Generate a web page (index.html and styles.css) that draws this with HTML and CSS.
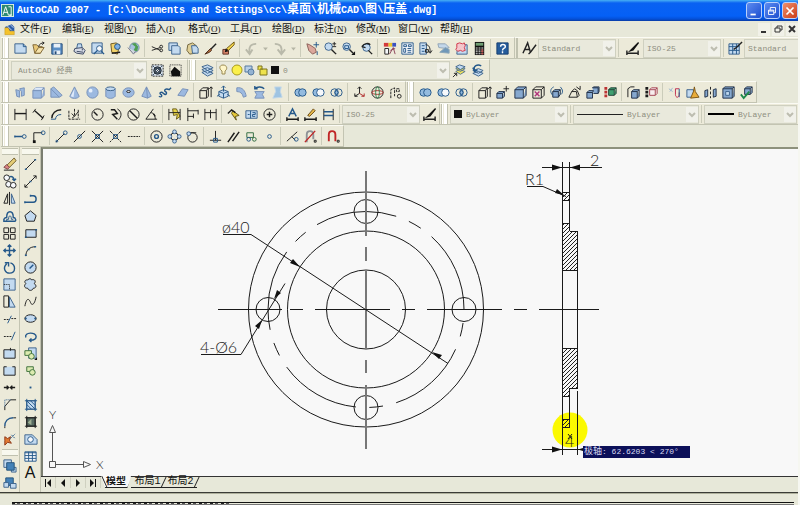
FILE: index.html
```
<!DOCTYPE html>
<html lang="zh-CN">
<head>
  <meta charset="UTF-8">
  <meta name="viewport" content="width=device-width, initial-scale=1.0">
  <title>AutoCAD 2007</title>
  <link rel="stylesheet" href="styles.css">
</head>
<body>

  <!-- Title bar -->
  <header class="titlebar">
    <svg class="app-icon" viewBox="0 0 14 14"><path d="M0 0h14v14H0z" fill="#dff0e6"/><path d="M1 1h12v12H1z" fill="#2d8a72"/><path d="M2 12L5 3l3 9M3 9h4M8 3h3v9H9M8 12h4" fill="none" stroke="#fff"/></svg>
    <h1>AutoCAD 2007 - [C:\Documents and Settings\cc\<span class="cjk">桌面</span>\<span class="cjk">机械</span>CAD\<span class="cjk">图</span>\<span class="cjk">压盖</span>.dwg]</h1>
    <div class="window-buttons">
      <button aria-label="最小化"><svg viewBox="0 0 16 16"><path d="M4 12h6" stroke-width="2"/></svg></button>
      <button aria-label="还原"><svg viewBox="0 0 16 16"><path d="M6 7V4h6v6H10M4 7h6v5H4zM4 8h6"/></svg></button>
      <button class="close" aria-label="关闭"><svg viewBox="0 0 16 16"><path d="M4 4l8 8M12 4l-8 8" stroke-width="2"/></svg></button>
    </div>
  </header>

  <!-- Menu -->
  <nav class="menubar">
    <svg class="doc-icon" viewBox="0 0 14 14"><path d="M1 4l8-3 3 3v5H3z" fill="#2b5ca8"/><path d="M1 5h4l2 4h5v4H1z" fill="#f4c22c" stroke="#b98a14" stroke-width=".5"/><path d="M4 3l5 5M8 2l3 3" stroke="#dfeaf8"/></svg>
    <button>文件<i>(<u>F</u>)</i></button>
    <button>编辑<i>(<u>E</u>)</i></button>
    <button>视图<i>(<u>V</u>)</i></button>
    <button>插入<i>(<u>I</u>)</i></button>
    <button>格式<i>(<u>O</u>)</i></button>
    <button>工具<i>(<u>T</u>)</i></button>
    <button>绘图<i>(<u>D</u>)</i></button>
    <button>标注<i>(<u>N</u>)</i></button>
    <button>修改<i>(<u>M</u>)</i></button>
    <button>窗口<i>(<u>W</u>)</i></button>
    <button>帮助<i>(<u>H</u>)</i></button>
    <div class="mdi-buttons">
      <button aria-label="最小化窗口"><svg viewBox="0 0 12 12"><path d="M3 9h5" stroke-width="2"/></svg></button>
      <button aria-label="还原窗口"><svg viewBox="0 0 12 12"><path d="M5 5V3h5v4H8M3 5h5v4H3z"/></svg></button>
      <button aria-label="关闭窗口"><svg viewBox="0 0 12 12"><path d="M3 3l6 6M9 3l-6 6" stroke-width="2"/></svg></button>
    </div>
  </nav>

  <!-- Standard and styles -->
  <div class="dock-row">
    <div class="toolbar">
      <button title="新建"><svg viewBox="0 0 16 16"><path class="f" d="M2 3h9l3 3v7H2z"/><path class="n" d="M11 3v3h3"/></svg></button>
      <button title="打开"><svg viewBox="0 0 16 16"><path d="M2 4h4l2 2h4l-2 7H4z" fill="#e9c878" stroke="#7d6434"/><path d="M8 6c1-3 3-4 6-4l-2-1m2 1l-2 2"/><path d="M4 13l4-6h6l-4 6z" fill="#f6e3ac" stroke="#7d6434"/></svg></button>
      <button title="保存"><svg viewBox="0 0 16 16"><path d="M3 3h11v11H3z" fill="#5b8fc6" stroke="#234b78"/><path d="M5 3h7v4H5zM5 10h7v4H5z" fill="#e8f0f8" stroke="none"/><path d="M6 11h2v3H6z" fill="#234b78" stroke="none"/></svg></button>
      <span class="sep"></span>
      <button title="打印"><svg viewBox="0 0 16 16"><path class="f" d="M5 8l1-5h4l1 5"/><path d="M3 8l8-1 3 3-2 4-7-1-3-2z" fill="#d6dbe6" stroke="#3a4560"/><path d="M5 11l7 1M11 8v2" stroke="#3a4560"/></svg></button>
      <button title="打印预览"><svg viewBox="0 0 16 16"><path class="f" d="M2 2h11v11H2z"/><circle class="w n" cx="10" cy="8" r="3"/><path class="n t" d="M12 11l3 3M8 10l-4 4"/></svg></button>
      <button title="发布"><svg viewBox="0 0 16 16"><path d="M3 3l6-1 3 4-2 8-6-2z" fill="#f0d16a" stroke="#6c5620"/><circle cx="10" cy="6" r="3" fill="#7db0e6" stroke="#24527a"/><path class="t" d="M4 13l9-1"/></svg></button>
      <button title="三维 DWF"><svg viewBox="0 0 16 16"><circle cx="9" cy="7" r="5" fill="#a9c2de" stroke="#6f8aa8"/><path d="M6 3l4 3-2 4 4 1 1-5-3-4z" fill="#4f9e52" stroke="none"/><path d="M2 7l6 7 2-3" fill="#cfd8e0" stroke="#778"/></svg></button>
      <span class="sep"></span>
      <button title="剪切"><svg viewBox="0 0 16 16"><path d="M3 6l9 4M3 10l9-3"/><circle cx="13" cy="6" r="1.5"/><circle cx="13" cy="10" r="1.5"/></svg></button>
      <button title="复制"><svg viewBox="0 0 16 16"><path class="f" d="M2 2h9v8H2z"/><path class="f" d="M5 5h7l2 2v7H5z"/></svg></button>
      <button title="粘贴"><svg viewBox="0 0 16 16"><path d="M3 4l5-2 4 3-1 8-6 1-3-4z" fill="#e0cf96" stroke="#70643c"/><path class="f" d="M7 5h5l2 3v5H8z"/></svg></button>
      <button title="特性匹配"><svg viewBox="0 0 16 16"><path class="t" d="M14 3L8 9"/><path d="M8 8l-6 6 5-2 2-2z" fill="#b06a3c" stroke="#4a2a18"/></svg></button>
      <button title="块编辑器"><svg viewBox="0 0 16 16"><path d="M2 9h6v5H2z" fill="#d9846a" stroke="#5c2f22"/><path d="M14 1l-8 7 2 2 6-6z" fill="#f3d44c" stroke="#6a5410"/><path class="s" d="M5 8l3 3-4 1z"/></svg></button>
      <span class="sep"></span>
      <button title="放弃" disabled><svg viewBox="0 0 16 16"><path class="g" d="M13 3C7 3 5 6 6 13M2 9l4 5 3-5"/></svg></button>
      <button class="drop" title="放弃列表" disabled><svg viewBox="0 0 8 16"><path d="M2 7h5L4.5 10z" fill="#b5b5a5" stroke="none"/></svg></button>
      <button title="重做" disabled><svg viewBox="0 0 16 16"><path class="g" d="M3 3c6 0 8 3 7 10M6 9l4 5 4-5"/></svg></button>
      <button class="drop" title="重做列表" disabled><svg viewBox="0 0 8 16"><path d="M2 7h5L4.5 10z" fill="#b5b5a5" stroke="none"/></svg></button>
      <span class="sep"></span>
      <button title="实时平移"><svg viewBox="0 0 16 16"><path d="M2 3l3 1 6 4 1 4-4 2-4-4z" fill="#dba79c" stroke="#8b5f58"/><path class="n" d="M12 1v6M9 4h6M13 11v4"/></svg></button>
      <button title="实时缩放"><svg viewBox="0 0 16 16"><circle class="f" cx="6" cy="6" r="4"/><path class="t" d="M9 9l5 5"/><path d="M12 1v4M10 3h4M10 6h4"/></svg></button>
      <button title="窗口缩放"><svg viewBox="0 0 16 16"><circle class="f" cx="6" cy="6" r="4"/><path class="n" d="M4 5h4v3H4z"/><path class="t" d="M9 9l4 4"/><path class="s" d="M15 11v4h-4z"/></svg></button>
      <button title="缩放上一个"><svg viewBox="0 0 16 16"><circle class="f" cx="8" cy="7" r="4"/><path class="t" d="M10 10l4 4M3 6c3-4 7-4 9-2M3 6l4 1"/></svg></button>
      <span class="sep"></span>
      <button title="特性"><svg viewBox="0 0 16 16"><path d="M2 2h5v4H2z" fill="#d33a3a" stroke="none"/><path d="M7 2h4v4H7z" fill="#e8c52d" stroke="none"/><path d="M11 2h4v4h-4z" fill="#3b52c0" stroke="none"/><path class="w" d="M3 8h4v6H3z"/><path d="M8 14l4-7 2 7M9 10l5-2" stroke="#8c4057"/></svg></button>
      <button title="设计中心"><svg viewBox="0 0 16 16"><path class="w n" d="M2 2h12v12H2z"/><path class="n" d="M4 4h3v2H4zM9 4h3v2H9zM4 8h2v4H4zM8 8h4M8 10h4M8 12h4"/></svg></button>
      <button title="工具选项板"><svg viewBox="0 0 16 16"><path class="f" d="M2 2h7v12H2z"/><path class="n" d="M4 5h3M4 8h3M4 11h3"/><path d="M8 4c4 0 5 3 5 8M11 10l2 3 2-3M8 9h3v3H8z"/></svg></button>
      <button title="图纸集管理器"><svg viewBox="0 0 16 16"><path d="M2 3h8l4 4-3 1-8-1z" fill="#c3d7ea" stroke="#91a4b5"/><path d="M4 12l6-5 4 2v4z" fill="#6f97b8" stroke="#8ba5b8"/></svg></button>
      <button title="标记集管理器"><svg viewBox="0 0 16 16"><path class="f" d="M4 4h10v10H3z"/><path d="M3 3l3-1 3 1 2-1 1 3-1 2 1 3-3 1-2-1-3 1-2-2 1-2z" fill="#f4c6cb" stroke="#cf3246"/></svg></button>
      <button title="计算器"><svg viewBox="0 0 16 16"><path class="s" d="M3 1h10v14H3z"/><path d="M4 2h8v3H4z" fill="#6e9c72" stroke="none"/><path d="M5 7v7M8 7v7M11 7v7" stroke="#ddd" stroke-width="2" stroke-dasharray="1 1"/><path d="M11 9v5" stroke="#c33" stroke-width="2" stroke-dasharray="1 1"/></svg></button>
      <span class="sep"></span>
      <button title="帮助"><svg viewBox="0 0 16 16"><path d="M2 2h12v12H2z" fill="#255c9c" stroke="#153c6d"/><path d="M6 6c0-3 5-3 5 0 0 2-3 1-3 4M8 11v2" stroke="#fff" stroke-width="1.5"/></svg></button>
      <span class="pad"></span>
    </div>
    <div class="toolbar fill">
      <button title="文字样式"><svg viewBox="0 0 16 16"><path class="t" d="M1 13L6 2l3 10M3 9h5"/><path class="t" d="M15 4l-6 8-2 2"/></svg></button>
      <label class="combo w78"><select aria-label="文字样式"><option>Standard</option></select></label>
      <span class="sep"></span>
      <button class="wide" title="标注样式"><svg viewBox="0 0 16 16"><path class="t" d="M2 13h12M2 10v5M14 10v5"/><path class="s" d="M14 1l1 1-6 8-6 2 3-3z"/></svg></button>
      <label class="combo w78"><select aria-label="标注样式"><option>ISO-25</option></select></label>
      <span class="sep"></span>
      <button title="表格样式"><svg viewBox="0 0 16 16"><path class="f" d="M1 3h11v11H1z"/><path class="n" d="M1 6h11M1 10h11M5 3v11M9 3v11"/><path class="t" d="M15 1l-6 6-3 2"/></svg></button>
      <label class="combo cut"><select aria-label="表格样式"><option>Standard</option></select></label>
    </div>
  </div>

  <!-- Workspaces and layers -->
  <div class="dock-row">
    <div class="toolbar">
      <label class="combo w136"><select class="indent" aria-label="工作空间"><option>AutoCAD 经典</option></select></label>
      <button title="工作空间设置"><svg viewBox="0 0 16 16"><path d="M2 2h12v12H2z" fill="#dce7f2" stroke-dasharray="2 1"/><circle cx="8" cy="8" r="4" fill="#526b86"/><circle class="w" cx="8" cy="8" r="2"/><path d="M3 3l10 10M13 3L3 13" stroke="#3c4d60"/></svg></button>
      <button title="我的工作空间"><svg viewBox="0 0 16 16"><path d="M2 2h12v12H2z" stroke-dasharray="1 1"/><path class="s" d="M3 9l4-5 6 5v5H4z"/></svg></button>
      <span class="pad"></span>
    </div>
    <div class="toolbar">
      <button title="图层特性管理器"><svg viewBox="0 0 16 16"><path class="f" d="M2 10l6-2 6 3-6 3zM2 7l6-2 6 3-6 3zM2 4l6-2 6 3-6 3z"/></svg></button>
      <div class="combo layer">
        <svg viewBox="0 0 66 16"><path d="M6 3c4 0 5 4 2 6v3H5V9C2 7 2 3 6 3z" fill="#fff6c8" stroke="#9a8a52"/><circle cx="20" cy="8" r="5" fill="#fbf04a" stroke="#a89a1c"/><path d="M28 4h7v6h-7z" fill="#b8cfe6" stroke="#567aa0"/><circle cx="34" cy="10" r="3" fill="#93b2d2" stroke="#567aa0"/><path d="M41 8V4h4v4M43 7h7v6h-7z" fill="#eee24c" stroke="#7d741c"/><path class="s" d="M54 4h8v8h-8z"/></svg>
        <select aria-label="图层"><option>0</option></select>
      </div>
      <button title="将对象的图层置为当前"><svg viewBox="0 0 16 16"><path d="M4 9l4-2 6 2-5 3zM4 6l4-2 6 2-5 3z" fill="#f3e45a" stroke="#56758c"/><path class="f" d="M4 4l4-2 6 2-5 3z"/><path d="M1 15l4-4M2 11h3v3"/></svg></button>
      <button title="上一个图层"><svg viewBox="0 0 16 16"><path class="f" d="M3 11l6-2 5 2-5 3zM3 8l6-2 5 2-5 3z"/><path class="n t" d="M5 8c-2-5 3-7 7-5M3 5l2 4 3-2"/></svg></button>
      <span class="pad"></span>
    </div>
  </div>

  <!-- Modeling and solid editing -->
  <div class="dock-row">
    <div class="toolbar">
      <button title="多段体"><svg viewBox="0 0 16 16"><path class="v" d="M3 5l4 1v7l-3-1zM7 4l5-1v8l-3 1V7z"/></svg></button>
      <button title="长方体"><svg viewBox="0 0 16 16"><path class="v" d="M2 6h9v8H2zM2 6l3-3h9l-3 3M14 3v8l-3 3"/><path d="M3 5l2-2h8l-2 2z" fill="#dfeafa" stroke="none"/></svg></button>
      <button title="楔体"><svg viewBox="0 0 16 16"><path class="v" d="M2 4l9 9H2zM2 4l3-2 9 9-3 2"/></svg></button>
      <button title="圆锥体"><svg viewBox="0 0 16 16"><path class="v" d="M8 2l5 10c-1 3-9 3-10 0z"/><path d="M8 4l-1 9-3-1z" fill="#dfeafa" stroke="none"/></svg></button>
      <button title="球体"><svg viewBox="0 0 16 16"><circle class="v" cx="8" cy="8" r="6"/><circle cx="6" cy="6" r="2" fill="#e6effc" stroke="none"/></svg></button>
      <button title="圆柱体"><svg viewBox="0 0 16 16"><path class="v" d="M3 4v8c2 3 8 3 10 0V4"/><ellipse class="f" cx="8" cy="4" rx="5" ry="2"/></svg></button>
      <button title="圆环体"><svg viewBox="0 0 16 16"><ellipse class="v" cx="8" cy="8" rx="6" ry="5"/><ellipse class="w" cx="8" cy="7" rx="2" ry="1"/></svg></button>
      <button title="棱锥面"><svg viewBox="0 0 16 16"><path class="v" d="M8 2l5 10-4 2-6-2zM8 2l1 12"/></svg></button>
      <button title="螺旋"><svg viewBox="0 0 16 16"><path class="n t" d="M2 12c3 2 4-1 2-2s0-4 3-1 4-1 2-2 0-4 4-2l2-2"/></svg></button>
      <button title="平面曲面"><svg viewBox="0 0 16 16"><path class="v" d="M3 11l5-7 6 1-4 7z"/></svg></button>
      <span class="sep"></span>
      <button title="拉伸"><svg viewBox="0 0 16 16"><path class="k" d="M2 6h7v8H2zM2 6l3-3h6L9 6M11 3v9l-2 2M14 13V2M12 4l2-2 2 2"/></svg></button>
      <button title="按住并拖动"><svg viewBox="0 0 16 16"><path class="f" d="M3 7l5-2 5 2v5l-5 2-5-2z"/><path class="n" d="M3 7l5 2 5-2M8 9v5M8 1v6M6 3l2-2 2 2M1 12l3-2M15 12l-3-2"/></svg></button>
      <button title="扫掠"><svg viewBox="0 0 16 16"><path class="v" d="M3 3c6-1 9 3 10 9l-3 1C9 9 7 7 3 7z"/></svg></button>
      <button title="旋转"><svg viewBox="0 0 16 16"><path class="v" d="M3 7h10l-2 3 2 4H3l2-4z"/><path class="n t" d="M3 4c3-3 8-2 10 0M3 1v3h3"/></svg></button>
      <button title="放样"><svg viewBox="0 0 16 16"><path d="M5 2h7l-1 5 2 6-10 1 3-7z" fill="#9fc4e2" stroke="#c4d9e8"/></svg></button>
      <span class="sep"></span>
      <button title="并集"><svg viewBox="0 0 16 16"><circle class="u" cx="6" cy="8" r="4"/><circle class="u" cx="10" cy="8" r="4"/></svg></button>
      <button title="差集"><svg viewBox="0 0 16 16"><circle class="u" cx="6" cy="8" r="4"/><circle class="w n" cx="10" cy="8" r="4"/></svg></button>
      <button title="交集"><svg viewBox="0 0 16 16"><circle class="n" cx="6" cy="8" r="4"/><circle class="n" cx="10" cy="8" r="4"/><path class="u" d="M8 5q3 3 0 6-3-3 0-6z"/></svg></button>
      <span class="sep"></span>
      <button title="三维移动"><svg viewBox="0 0 16 16"><path class="k" d="M8 9V2l-2 2m2-2l2 2M8 9l-5 3V9m0 3h3"/><path d="M8 9l5 3V9m0 3h-3" stroke="#b02a2a"/></svg></button>
      <button title="三维旋转"><svg viewBox="0 0 16 16"><circle class="k" cx="8" cy="8" r="6"/><ellipse cx="8" cy="8" rx="6" ry="2" stroke="#b02a2a"/><ellipse cx="8" cy="8" rx="2" ry="6" stroke="#26804a"/></svg></button>
      <button title="三维对齐"><svg viewBox="0 0 16 16"><path class="k" d="M3 14V5l4-2v9M9 4h3v3H9z" stroke-dasharray="3 1"/><circle cx="12" cy="12" r="2"/></svg></button>
    </div>
    <div class="toolbar">
      <button title="并集"><svg viewBox="0 0 16 16"><circle class="u" cx="6" cy="8" r="4"/><circle class="u" cx="10" cy="8" r="4"/></svg></button>
      <button title="差集"><svg viewBox="0 0 16 16"><circle class="u" cx="6" cy="8" r="4"/><circle class="w n" cx="10" cy="8" r="4"/></svg></button>
      <button title="交集"><svg viewBox="0 0 16 16"><circle class="n" cx="6" cy="8" r="4"/><circle class="n" cx="10" cy="8" r="4"/><path class="u" d="M8 5q3 3 0 6-3-3 0-6z"/></svg></button>
      <span class="sep"></span>
      <button title="拉伸面"><svg viewBox="0 0 16 16"><path class="k" d="M2 6h7v8H2zM2 6l3-3h6L9 6M11 3v9l-2 2M14 13V2M12 4l2-2 2 2"/></svg></button>
      <button title="移动面"><svg viewBox="0 0 16 16"><path class="e" d="M2 9h6v5H2zM2 9l2-2h6L8 9M10 7v5l-2 2"/><path d="M9 4h6M12 1v6"/></svg></button>
      <button title="偏移面"><svg viewBox="0 0 16 16"><path class="e" d="M2 5h9v9H2zM2 5l3-3h9l-3 3M14 2v9l-3 3"/></svg></button>
      <button title="删除面"><svg viewBox="0 0 16 16"><path class="k" d="M2 5h9v9H2zM2 5l3-3h9l-3 3M14 2v9l-3 3"/><path d="M4 7l5 5M9 7l-5 5" stroke="#b0347a" stroke-width="1.5"/></svg></button>
      <button title="旋转面"><svg viewBox="0 0 16 16"><path class="e" d="M4 7h6v6H4zM4 7l2-2h6l-2 2M12 5v5l-2 3"/><path class="n" d="M5 2C1 4 1 8 4 11M12 2c3 3 3 6 1 8"/></svg></button>
      <button title="倾斜面"><svg viewBox="0 0 16 16"><path class="k" d="M2 13l3-6h5l1 6zM5 7l3-3 3 2M11 6l2 5-2 2M10 2l4 3v-4"/></svg></button>
      <button title="复制面"><svg viewBox="0 0 16 16"><path class="e" d="M2 8h6v6H2zM2 8l2-2h5L8 8M8 3h6v6H9M8 3l1-1h6v5l-1 2"/></svg></button>
      <button title="着色面"><svg viewBox="0 0 16 16"><path d="M3 2v12" stroke="#b33" stroke-width="3" stroke-dasharray="3 1"/><path d="M6 5h6v6H6zM6 5l2-2h6l-2 2M14 3v6l-2 2" fill="#3fa070" stroke="#1f3f35"/></svg></button>
      <span class="sep"></span>
      <button title="复制边"><svg viewBox="0 0 16 16"><path class="e" d="M6 7h6v7H6zM6 7l2-2h6l-2 2M14 5v7l-2 2"/><path class="k" d="M2 13V4l3-2h4"/></svg></button>
      <button title="着色边"><svg viewBox="0 0 16 16"><path class="k" d="M3 2v12" stroke-width="3" stroke-dasharray="3 1"/><path d="M6 5h6v6H6zM6 5l2-2h6l-2 2M14 3v6l-2 2" fill="#f7eded" stroke="#a34050"/></svg></button>
      <span class="sep"></span>
      <button title="压印"><svg viewBox="0 0 16 16"><path d="M2 4l4 3M3 7l3-4" stroke="#9ab6d0"/><path d="M13 4H9v6c0 4 4 4 4 0V8" stroke="#c0284a"/><path class="n" d="M13 4v9"/></svg></button>
      <button title="清除"><svg viewBox="0 0 16 16"><path class="f" d="M2 5h7v8H2z"/><path d="M10 2l1 5 4 6-9 1 3-7z" fill="#e8ac3a" stroke="#7a5415"/></svg></button>
      <button title="分割"><svg viewBox="0 0 16 16"><path class="e" d="M2 6l3-1v7l-3 1zM11 5l3-1v8l-3 1z"/><path class="k" d="M8 2v12" stroke-dasharray="3 2"/></svg></button>
      <button title="抽壳"><svg viewBox="0 0 16 16"><path class="e" d="M2 4h10v10H2zM2 4l2-2h10l-2 2M14 2v10l-2 2"/><path class="f" d="M5 7h4v4H5z"/></svg></button>
      <button title="检查"><svg viewBox="0 0 16 16"><path class="e" d="M6 4h6v6H6zM6 4l2-2h6l-2 2M14 2v6l-2 2"/><path d="M2 10l3 4 6-7" stroke="#1f8a4a" stroke-width="2"/></svg></button>
    </div>
  </div>

  <!-- Dimension and properties -->
  <div class="dock-row">
    <div class="toolbar">
      <button title="线性"><svg viewBox="0 0 16 16"><path class="k" d="M2 2v12M14 2v12"/><path class="k t" d="M2 7h12"/></svg></button>
      <button title="对齐"><svg viewBox="0 0 16 16"><path class="k" d="M5 2L2 6M14 9l-3 5"/><path class="k t" d="M4 4l9 8"/></svg></button>
      <button title="弧长"><svg viewBox="0 0 16 16"><path class="k t" d="M3 12C3 7 7 3 13 3"/><path class="n" d="M7 13c0-3 2-5 6-5M2 13h5"/></svg></button>
      <button title="坐标"><svg viewBox="0 0 16 16"><path class="k" d="M2 4v9h12M8 2v8l-3 2M12 3v9" stroke-dasharray="3 1"/><path class="k" d="M5 7l3 3 4-5"/></svg></button>
      <span class="sep"></span>
      <button title="半径"><svg viewBox="0 0 16 16"><circle class="k" cx="8" cy="8" r="6"/><path class="k t" d="M4 5l4 4"/></svg></button>
      <button title="折弯"><svg viewBox="0 0 16 16"><path class="k t" d="M3 3h4l3 4-5 1 5 5"/><path class="k" d="M10 2c5 3 5 8 1 12"/></svg></button>
      <button title="直径"><svg viewBox="0 0 16 16"><circle class="k" cx="8" cy="8" r="6"/><path class="k t" d="M4 4l8 8"/></svg></button>
      <button title="角度"><svg viewBox="0 0 16 16"><path class="k" d="M10 2L2 13h12M7 6c3 0 5 3 5 7"/><path class="k t" d="M10 7l2 3"/></svg></button>
      <span class="sep"></span>
      <button title="快速标注"><svg viewBox="0 0 16 16"><path d="M6 2h4l4 8-4 3 1-5-4 1z" fill="#e6d24a" stroke="#6b5d16"/><path class="k" d="M2 2v12M14 2v12M2 6h12"/></svg></button>
      <button title="基线"><svg viewBox="0 0 16 16"><path class="k" d="M3 1v14M9 7v5M14 3v5M3 4h11M3 10h6"/></svg></button>
      <button title="连续"><svg viewBox="0 0 16 16"><path class="k" d="M2 2v12M8 3v9M14 2v12M2 6h12"/></svg></button>
      <span class="sep"></span>
      <button title="快速引线"><svg viewBox="0 0 16 16"><path d="M7 4l7 5-4 1 1 4-5-7z" fill="#e6c93a" stroke="#5d5013"/><path class="k t" d="M2 7l4-4 4 3"/></svg></button>
      <button title="公差"><svg viewBox="0 0 16 16"><path class="f" d="M2 4h12v8H2z"/><path class="n" d="M7 4v8M4 8h2M9 6h3v2H9v2h3"/></svg></button>
      <button title="圆心标记"><svg viewBox="0 0 16 16"><circle class="k" cx="8" cy="8" r="6"/><path class="k t" d="M8 5v6M5 8h6"/></svg></button>
      <span class="sep"></span>
      <button title="编辑标注"><svg viewBox="0 0 16 16"><path class="k t" d="M2 13h12M2 11v4M14 11v4"/><path class="n t" d="M4 10l4-8 4 8M6 7h4"/></svg></button>
      <button title="编辑标注文字"><svg viewBox="0 0 16 16"><path class="k t" d="M2 13h12M2 11v4M14 11v4"/><path d="M5 9l6-7 2 2-6 6z" fill="#e7b94a" stroke="#6a4b16"/></svg></button>
      <button title="标注更新"><svg viewBox="0 0 16 16"><path class="k" d="M3 2v12M13 2v12"/><path class="n t" d="M3 5h10M3 9h10"/></svg></button>
      <span class="sep"></span>
      <label class="combo w78"><select aria-label="标注样式控制"><option>ISO-25</option></select></label>
      <button title="标注样式"><svg viewBox="0 0 16 16"><path class="t" d="M2 13h12M2 10v5M14 10v5"/><path class="s" d="M14 1l1 1-6 8-6 2 3-3z"/></svg></button>
    </div>
    <div class="toolbar fill">
      <div class="combo w118"><svg viewBox="0 0 12 12" class="swatch"><path class="s" d="M3 2h8v8H3z"/></svg><select aria-label="颜色"><option>ByLayer</option></select></div>
      <span class="sep"></span>
      <div class="combo w126"><svg class="line-sample" viewBox="0 0 50 12"><path d="M3 6.5h46" stroke="#222"/></svg><select aria-label="线型"><option>ByLayer</option></select></div>
      <span class="sep"></span>
      <div class="combo grow"><svg class="weight-sample" viewBox="0 0 30 12"><path d="M3 6h26" stroke="#000" stroke-width="2"/></svg><select aria-label="线宽"><option>ByLayer</option></select></div>
    </div>
  </div>

  <!-- Object snap -->
  <div class="dock-row">
    <div class="toolbar">
      <button title="临时追踪点"><svg viewBox="0 0 16 16"><path class="n t" d="M2 8h8M2 7v2"/><circle class="n" cx="12" cy="8" r="2"/></svg></button>
      <button title="捕捉自"><svg viewBox="0 0 16 16"><path class="k" d="M3 14V4h9"/><path class="s" d="M2 12h3v3H2z"/><circle class="n" cx="13" cy="4" r="2"/></svg></button>
      <span class="sep"></span>
      <button title="端点"><svg viewBox="0 0 16 16"><path class="k" d="M2 14l9-9"/><circle class="n" cx="12" cy="4" r="2"/><circle class="n" cx="3" cy="13" r="1"/></svg></button>
      <button title="中点"><svg viewBox="0 0 16 16"><path class="k" d="M2 14L14 2"/><circle class="n" cx="8" cy="8" r="2"/></svg></button>
      <button title="交点"><svg viewBox="0 0 16 16"><path class="k" d="M2 2l12 12M14 2L2 14"/><path class="n" d="M6 6h4v4H6z"/></svg></button>
      <button title="外观交点"><svg viewBox="0 0 16 16"><path class="k" d="M2 2l12 12M14 2L2 14" stroke-dasharray="4 1"/><path class="n" d="M6 6h4v4H6z"/></svg></button>
      <button title="延长线"><svg viewBox="0 0 16 16"><path class="k" d="M2 8h5M8 8h7" stroke-dasharray="2 1"/></svg></button>
      <span class="sep"></span>
      <button title="圆心"><svg viewBox="0 0 16 16"><circle class="k" cx="8" cy="8" r="6"/><circle class="n t" cx="8" cy="8" r="2"/></svg></button>
      <button title="象限点"><svg viewBox="0 0 16 16"><circle class="k" cx="8" cy="8" r="4"/><g class="f"><circle cx="8" cy="3" r="2"/><circle cx="8" cy="13" r="2"/><circle cx="3" cy="8" r="2"/><circle cx="13" cy="8" r="2"/></g></svg></button>
      <button title="切点"><svg viewBox="0 0 16 16"><circle class="k" cx="8" cy="9" r="5"/><path class="k" d="M2 4h10"/><circle class="f" cx="4" cy="5" r="2"/></svg></button>
      <span class="sep"></span>
      <button title="垂足"><svg viewBox="0 0 16 16"><path class="k" d="M8 2v10M2 12h12"/><path class="n" d="M6 10h4v4H6z"/></svg></button>
      <button title="平行"><svg viewBox="0 0 16 16"><path class="k t" d="M2 14l7-10M7 13l7-10"/></svg></button>
      <button title="插入点"><svg viewBox="0 0 16 16"><path d="M3 4h7v5H3z" stroke="#2f6b3f"/><circle cx="11" cy="11" r="2" stroke="#2f6b3f"/><circle class="n" cx="5" cy="11" r="2"/></svg></button>
      <button title="节点"><svg viewBox="0 0 16 16"><circle class="n" cx="8" cy="8" r="2"/></svg></button>
      <span class="sep"></span>
      <button title="最近点"><svg viewBox="0 0 16 16"><path class="k" d="M2 13L13 3M7 8l4 4"/><circle class="n" cx="12" cy="11" r="2"/></svg></button>
      <button title="无捕捉"><svg viewBox="0 0 16 16"><path d="M4 14V6c0-5 7-5 7 0v5" stroke="#8e9296" stroke-width="2"/><path d="M2 14L13 2" stroke="#c02626" stroke-width="1.5"/><path class="k" d="M12 12h2v2h-2z"/></svg></button>
      <span class="sep"></span>
      <button title="对象捕捉设置"><svg viewBox="0 0 16 16"><path d="M3 13V6c0-5 7-5 7 0v7" stroke="#c02626" stroke-width="2"/><path class="k" d="M12 12h2v2h-2z"/></svg></button>
    </div>
  </div>

  <main class="workspace">
    <!-- Modify -->
    <div class="side-column">
      <div class="side-toolbar long">
        <button title="删除"><svg viewBox="0 0 16 16"><path d="M13 1l2 3-7 7-3-2z" fill="#e5cd76" stroke="#6f5c2b"/><path d="M5 8l3 3-2 2-4-2z" fill="#d98383" stroke="#7b4545"/><path class="k" d="M2 14h11"/></svg></button>
        <button title="复制"><svg viewBox="0 0 16 16"><circle class="w" cx="5" cy="4" r="3"/><circle class="w" cx="7" cy="11" r="3"/><circle class="w" cx="12" cy="12" r="3"/><path class="n t" d="M8 3c3-1 5 1 5 4m-2-2l2 2 2-2"/></svg></button>
        <button title="镜像"><svg viewBox="0 0 16 16"><path class="k" d="M6 3v10H2zM8 1v14"/><path class="f" d="M10 3v10h4z"/></svg></button>
        <button title="偏移"><svg viewBox="0 0 16 16"><path class="n t" d="M2 13v-2c1-2 3-2 3-2 0-8 7-8 7 0 3 0 3 4 2 4z"/><path class="n" d="M5 13v-2h2c0-5 3-5 3 0h2"/></svg></button>
        <button title="阵列"><svg viewBox="0 0 16 16"><path class="k" d="M2 2h5v5H2zM9 2h5v5H9zM2 9h5v5H2zM9 9h5v5H9z"/></svg></button>
        <button title="移动"><svg viewBox="0 0 16 16"><path class="n t" d="M8 2v12M2 8h12M6 4l2-2 2 2M6 12l2 2 2-2M4 6L2 8l2 2M12 6l2 2-2 2"/></svg></button>
        <button title="旋转"><svg viewBox="0 0 16 16"><path class="n t" d="M5 4C0 9 4 14 8 14c7 0 7-9 1-11M3 3h4v4"/></svg></button>
        <button title="缩放"><svg viewBox="0 0 16 16"><path class="f" d="M2 2h12v12H2z"/><path class="k" d="M2 8h6v6" stroke-dasharray="1 1"/></svg></button>
        <button title="拉伸"><svg viewBox="0 0 16 16"><path class="k" d="M2 2h5v12H2z"/><path class="f" d="M8 3l6 11H8z"/></svg></button>
        <button title="修剪"><svg viewBox="0 0 16 16"><path class="k" d="M2 8h5M10 7h5" stroke-dasharray="2 1"/><path class="n" d="M6 12l4-8"/></svg></button>
        <button title="延伸"><svg viewBox="0 0 16 16"><path class="k" d="M2 8h9" stroke-dasharray="2 1"/><path class="n" d="M10 12l4-9"/></svg></button>
        <button title="打断于点"><svg viewBox="0 0 16 16"><path class="f k" d="M2 4h12v9H2z"/><path class="k" d="M9 2v3"/></svg></button>
        <button title="打断"><svg viewBox="0 0 16 16"><path class="f k" d="M5 4H2v9h12V4h-3"/></svg></button>
        <button title="合并"><svg viewBox="0 0 16 16"><path class="k t" d="M2 8h5M9 8h5M5 6l2 2-2 2M11 6L9 8l2 2"/></svg></button>
        <button title="倒角"><svg viewBox="0 0 16 16"><path class="k" d="M3 14v-4l6-7h6"/><path class="n" d="M3 10V3h6" stroke-dasharray="1 1"/></svg></button>
        <button title="圆角"><svg viewBox="0 0 16 16"><path class="k" d="M3 14v-2M12 3h3"/><path class="n t" d="M3 12c0-5 3-9 9-9"/></svg></button>
        <button title="分解"><svg viewBox="0 0 16 16"><path d="M3 5l3 2 3-2-1 4 2 3-4-1-3 3v-5z" fill="#e27a32" stroke="#8b3414"/><path class="n" d="M9 7l5-5M10 3l4 4" stroke-dasharray="2 1"/></svg></button>
      </div>
      <div class="side-toolbar order">
        <button title="前置"><svg viewBox="0 0 16 16"><path class="f" d="M2 2h8v8H2z"/><path class="f" d="M10 10h5v5h-5z"/><path d="M5 5h8v8H5z" fill="#4381b8" stroke="#24527a"/></svg></button>
        <button title="后置"><svg viewBox="0 0 16 16"><path d="M4 2h8v8H4z" fill="#4381b8" stroke="#24527a"/><path class="f" d="M2 7h5v5H2zM9 8h6v5H9z"/></svg></button>
      </div>
    </div>

    <!-- Draw -->
    <div class="side-column draw">
      <div class="side-toolbar long">
        <button title="直线"><svg viewBox="0 0 16 16"><path class="k" d="M3 13L13 3"/><path class="n t" d="M2 13h2M12 3h2"/></svg></button>
        <button title="构造线"><svg viewBox="0 0 16 16"><path class="k" d="M2 14L14 2"/><path class="k" d="M2 11v3h3M11 2h3v3"/><path class="n t" d="M7 8h2"/></svg></button>
        <button title="多段线"><svg viewBox="0 0 16 16"><path class="n t" d="M2 12h9c4 0 4-7 0-7H8M2 11v2M8 4v2"/></svg></button>
        <button title="正多边形"><svg viewBox="0 0 16 16"><path class="f k" d="M8 2l6 5-2 6H4L2 7z"/></svg></button>
        <button title="矩形"><svg viewBox="0 0 16 16"><path class="f k" d="M3 4h11v8H3z"/><path class="n t" d="M2 12h2M13 4h2"/></svg></button>
        <button title="圆弧"><svg viewBox="0 0 16 16"><path class="k" d="M3 14c0-6 4-10 10-10"/><path class="n t" d="M2 13h2M5 7h2M12 4h2"/></svg></button>
        <button title="圆"><svg viewBox="0 0 16 16"><circle class="f k" cx="8" cy="8" r="6"/><path class="n t" d="M7 9l4-4"/></svg></button>
        <button title="修订云线"><svg viewBox="0 0 16 16"><path class="f k" d="M5 3c2-2 4-1 4 0 4-1 5 2 3 4 3 2 2 5-1 5-1 3-5 3-6 0-4 0-4-3-2-5-2-2-1-4 2-4z"/></svg></button>
        <button title="样条曲线"><svg viewBox="0 0 16 16"><path class="k" d="M2 13C4 2 7 6 8 9s4 4 6-6"/></svg></button>
        <button title="椭圆"><svg viewBox="0 0 16 16"><ellipse class="f k" cx="8" cy="8" rx="6" ry="4"/><path class="n t" d="M2 8h2M12 8h2"/></svg></button>
        <button title="椭圆弧"><svg viewBox="0 0 16 16"><path class="n t" d="M3 9C1 3 14 3 14 8c0 4-5 4-6 4M9 10l-2 2 2 2"/></svg></button>
        <button title="插入块"><svg viewBox="0 0 16 16"><path class="f" d="M6 2h8v11H6z"/><path class="l" d="M2 5h7v5H2z"/><circle class="l" cx="9" cy="11" r="3"/><path class="s" d="M15 12v3h-3z"/></svg></button>
        <button title="创建块"><svg viewBox="0 0 16 16"><path class="l" d="M4 4h7v5H4z"/><circle class="l" cx="10" cy="10" r="3"/></svg></button>
        <button title="点"><svg viewBox="0 0 16 16"><path d="M7 7h2v2H7z" fill="#24588a" stroke="none"/></svg></button>
        <button title="图案填充"><svg viewBox="0 0 16 16"><path class="f" d="M4 4h9v9H4z"/><path class="n" d="M2 4h13M4 2v13M2 13h13M13 2v13M4 8l5 5M4 4l9 9M8 4l5 5"/></svg></button>
        <button title="渐变色"><svg viewBox="0 0 16 16"><path d="M4 4h9v9H4z" fill="#586b62"/><path class="k" d="M2 4h13M4 2v13M2 13h13M13 2v13"/><path d="M5 9l4-4v7z" fill="#9eae92" stroke="none"/></svg></button>
        <button title="面域"><svg viewBox="0 0 16 16"><path class="f" d="M2 3h8l5 5v5H2z"/><circle class="w n" cx="8" cy="8" r="3"/></svg></button>
        <button title="表格"><svg viewBox="0 0 16 16"><path class="w n" d="M2 3h12v10H2z"/><path class="n" d="M2 4h12M2 7h12M2 10h12M6 3v10M10 3v10"/></svg></button>
        <button class="text-tool" title="多行文字">A</button>
      </div>
    </div>

    <section class="editor">
      <div class="canvas">
        <svg class="drawing" aria-label="压盖">
          <defs>
            <pattern id="hatch" width="4" height="4" patternUnits="userSpaceOnUse"><path d="M-1 1l2-2M0 4l4-4M3 5l2-2" stroke="#222"/></pattern>
          </defs>
          <g transform="translate(-43 -149)">
            <!-- front view -->
            <circle cx="366" cy="309.5" r="117.5"/>
            <circle cx="366" cy="309.5" r="78.5"/>
            <circle cx="366" cy="309.5" r="39.5"/>
            <circle cx="366" cy="309.5" r="98" pathLength="360" stroke-dasharray="48 8 8 8" stroke-dashoffset="48"/>
            <circle cx="366" cy="211.5" r="12"/>
            <circle cx="366" cy="407.5" r="12"/>
            <circle cx="268" cy="309.5" r="12"/>
            <circle cx="464" cy="309.5" r="12"/>
            <path class="thick" d="M366 171v65M366 247v14M366 271v78M366 360v13M366 385v64"/>
            <path d="M218 309.5h64M290 309.5h13M315 309.5h75M402 309.5h13M427 309.5h75M514 309.5h13M539 309.5h60"/>
            <!-- dimensions of the front view -->
            <path d="M223 234.5h28l197 129M201 354.5h40l44-71"/>
            <path class="solid" d="M300 267l-10-4 3-4zM432 352l7 7 3-4zM274 299l3-9 4 3zM262 320l-7 6 4 3z"/>
            <text x="222" y="233">ø40</text>
            <text x="200" y="353">4-Ø6</text>
            <!-- cursor highlight -->
            <circle class="cursor-spot" cx="570" cy="430" r="17.5"/>
            <!-- side view -->
            <path class="hatched" d="M562 192h8v8h-8zM562 419h8v8h-8zM562 223h8v8h8v39h-16zM562 349h16v39h-8v8h-8z"/>
            <path d="M562.5 162v293M569.5 162v69M577.5 231v158M569.5 388v39M577.5 391v64"/>
            <path d="M562 192.5h8M562 200.5h8M562 223.5h8M570 231.5h8M562 270.5h16M562 348.5h16M570 388.5h8M562 396.5h8M562 419.5h8M562 427.5h8"/>
            <path d="M542 167.5h20M562 167.5h40M542 449.5h43M527 186.5h16l23 10"/>
            <path class="solid" d="M562 167.5l-10-3v6zM570 167.5l10-3v6zM562 449.5l-10-3v6zM578 449.5l10-3v6zM564 195l-9-2 2-4z"/>
            <text x="590" y="166">2</text>
            <text x="525" y="185">R1</text>
            <text x="565" y="447">4</text>
            <path d="M568 434l4 5M572 434l-4 5"/>
            <!-- UCS icon -->
            <g class="ucs">
              <path d="M49.5 461.5h6v6h-6zM52.5 461v-29M56 464.5h27M49.5 432.5l3-7 3 7zM83.5 461.5l7 3-7 3z"/>
              <text x="49" y="419">Y</text>
              <text x="96" y="469">X</text>
            </g>
          </g>
        </svg>
        <div class="polar-tip"><span>极轴</span>: 62.6203 &lt; 270°</div>
      </div>
      <div class="layout-tabs">
        <button class="nav" aria-label="第一个"><svg viewBox="0 0 10 10"><path d="M2 1v8h1V1zM8 1v8L4 5z"/></svg></button>
        <button class="nav" aria-label="上一个"><svg viewBox="0 0 10 10"><path d="M7 1v8L3 5z"/></svg></button>
        <button class="nav" aria-label="下一个"><svg viewBox="0 0 10 10"><path d="M3 1v8l4-4z"/></svg></button>
        <button class="nav" aria-label="最后一个"><svg viewBox="0 0 10 10"><path d="M2 1v8l4-4zM7 1v8h1V1z"/></svg></button>
        <button class="tab active">模型</button>
        <button class="tab">布局1</button>
        <button class="tab">布局2</button>
      </div>
    </section>
  </main>

  <footer class="command-window"><div class="history"></div></footer>

</body>
</html>
```
FILE: styles.css
```
* {
  box-sizing: border-box;
}

body {
  display: flex;
  flex-direction: column;
  height: 100vh;
  margin: 0;
  overflow: hidden;
  border-right: 2px solid #f6f7f1;
  background: #e7e8d9;
  color: #111;
  font-family: "Liberation Mono", "Noto Sans CJK SC", monospace;
  font-size: 10px;
}

button {
  margin: 0;
  padding: 0;
  border: 0;
  background: none;
  color: inherit;
  font: inherit;
}

svg {
  display: block;
  flex: none;
  fill: none;
}

/* Title bar */
.titlebar {
  display: flex;
  align-items: center;
  flex: none;
  height: 21px;
  padding: 0 0 0 1px;
  background: linear-gradient(#48b0f4 0, #0a62f2 3px, #0560f6 16px, #0450d8 19px, #0a3ca4 21px);
  color: #fff;
}

.app-icon {
  width: 13px;
  height: 13px;
}

.titlebar h1 {
  flex: 1;
  margin: 0 0 0 3px;
  font-size: 10px;
  line-height: 18px;
  white-space: nowrap;
}

.cjk {
  font-size: 12px;
}

.window-buttons {
  display: flex;
  gap: 2px;
}

.window-buttons button {
  width: 16px;
  height: 17px;
  border: 1px solid #b9d0fa;
  border-radius: 3px;
  background: linear-gradient(135deg, #5c8bf0, #1c4ed0);
}

.window-buttons .close {
  background: linear-gradient(135deg, #ee8f6c, #cc3d16);
}

.window-buttons svg {
  width: 14px;
  height: 14px;
  stroke: #fff;
}

/* Menu */
.menubar {
  display: flex;
  align-items: center;
  flex: none;
  height: 16px;
  padding-left: 4px;
}

.doc-icon {
  width: 12px;
  height: 13px;
  margin-right: 4px;
}

.menubar > button {
  width: 42px;
  line-height: 14px;
  text-align: left;
  white-space: nowrap;
}

.menubar i {
  font-family: "Liberation Serif", serif;
  font-size: 9px;
  font-style: normal;
}

.mdi-buttons {
  display: flex;
  gap: 2px;
  margin-left: auto;
}

.mdi-buttons button {
  width: 12px;
  height: 13px;
  background: #f1f1e8;
}

.mdi-buttons svg {
  width: 12px;
  height: 12px;
  stroke: #333;
}

/* Docked toolbars */
.dock-row {
  display: flex;
  flex: none;
  height: 22px;
  padding-left: 1px;
}

.toolbar {
  display: flex;
  align-items: center;
  padding-right: 1px;
  border-top: 1px solid #fbfbf4;
  border-right: 1px solid #c3c4b2;
  border-bottom: 1px solid #c3c4b2;
  background: #ecead9;
}

.toolbar::before {
  content: "";
  align-self: stretch;
  width: 5px;
  margin: 0 2px 0 1px;
  border: solid #c0c1af;
  border-width: 0 1px;
  background: linear-gradient(90deg, #fff 1px, transparent 1px, transparent 2px, #fff 2px);
}

.toolbar.fill {
  flex: 1;
  min-width: 0;
  border-right: 0;
}

.toolbar button {
  flex: none;
  width: 18px;
  height: 18px;
}

.toolbar button.drop {
  width: 10px;
}

.toolbar button.wide {
  width: 22px;
}

.toolbar button svg {
  width: 15px;
  height: 15px;
  margin: 0 auto;
}

.toolbar button.drop svg {
  width: 8px;
}

.sep {
  flex: none;
  width: 1px;
  height: 18px;
  margin: 0 2px;
  background: #cbccba;
}

.pad {
  width: 2px;
}

/* Icon paints */
.toolbar svg,
.side-toolbar svg {
  stroke: #222;
}

svg .f { fill: #c3daf0; stroke: #3c628c; }
svg .w { fill: #f6f8fb; }
svg .k { stroke: #1c1c1c; }
svg .n { stroke: #24588a; }
svg .t { stroke-width: 1.5; }
svg .g { stroke: #b9b9aa; stroke-width: 2; }
svg .s { fill: #111; stroke: none; }
svg .v { fill: #9cb9e0; stroke: #7690b8; }
svg .e { fill: #86a8cf; stroke: #1f2f47; }
svg .u { fill: #94bbdf; stroke: #24588a; }
svg .l { fill: #dcebb0; stroke: #3c6f3a; }

/* Drop-down lists */
.combo {
  display: flex;
  align-items: center;
  flex: none;
  height: 19px;
  border: 1px solid #cfd0c0;
  background: #e9e9dc;
}

.combo select {
  flex: 1;
  min-width: 0;
  height: 17px;
  padding: 0 14px 0 3px;
  border: 0;
  appearance: none;
  background: url("data:image/svg+xml,%3Csvg xmlns='http://www.w3.org/2000/svg' width='12' height='15'%3E%3Cpath d='M0 0h12v15H0z' fill='%23f1f1ea'/%3E%3Cpath d='M3 6l3 3 3-3' fill='none' stroke='%23bdbdb0' stroke-width='2'/%3E%3C/svg%3E") no-repeat right center;
  color: #8e8e80;
  font-family: "Liberation Mono", "Noto Sans CJK SC", monospace;
  font-size: 8px;
}

.combo select.indent {
  padding-left: 6px;
}

.w78 { width: 78px; }
.w118 { width: 118px; }
.w126 { width: 126px; }
.w136 { width: 136px; margin-right: 1px; }
.layer { width: 234px; }

.combo.cut,
.combo.grow {
  flex: 1;
}

.combo.cut select {
  background: none;
}

.layer > svg {
  width: 66px;
  height: 16px;
}

.layer select {
  padding-left: 0;
}

.swatch {
  width: 12px;
  height: 12px;
}

.line-sample {
  width: 50px;
  height: 12px;
}

.weight-sample {
  width: 30px;
  height: 12px;
}

/* Side toolbars */
.workspace {
  display: flex;
  flex: 1;
  min-height: 0;
  border-bottom: 1px solid #3b3c36;
}

.side-column {
  display: flex;
  flex-direction: column;
  flex: none;
  width: 20px;
  overflow: hidden;
  border-right: 1px solid #c3c4b2;
  background: #ecead9;
}

.side-column.draw {
  width: 21px;
  padding-bottom: 10px;
}

.side-toolbar {
  display: flex;
  flex-direction: column;
}

.side-toolbar::before {
  content: "";
  flex: none;
  height: 5px;
  margin: 1px 1px 1px 2px;
  border: solid #c0c1af;
  border-width: 1px 0;
  background: #f8f8ee;
}

.side-toolbar.long {
  flex: 1;
}

.side-toolbar.order {
  height: 44px;
}

.side-toolbar button {
  display: flex;
  align-items: center;
  justify-content: center;
  flex: 1;
  min-height: 0;
}

.side-toolbar svg {
  width: 15px;
  height: 15px;
}

.side-toolbar .text-tool {
  font-family: "Liberation Sans", sans-serif;
  font-size: 16px;
  line-height: 16px;
}

/* Drawing area */
.editor {
  display: flex;
  flex-direction: column;
  flex: 1;
  min-width: 0;
  padding-bottom: 4px;
}

.canvas {
  position: relative;
  flex: 1;
  min-height: 0;
  border-top: 2px solid #8d917c;
  border-left: 2px solid #7a7d70;
  background: #f8f8f8;
}

.drawing {
  width: 100%;
  height: 100%;
  stroke: #1a1a1a;
}

.drawing .thick {
  stroke: #777;
  stroke-width: 2;
}

.drawing .solid {
  fill: #111;
  stroke: none;
}

.drawing .hatched {
  fill: url(#hatch);
  stroke: none;
}

.drawing .cursor-spot {
  fill: #fbf900;
  stroke: none;
}

.drawing text {
  fill: #222;
  stroke: none;
  font-family: Lato, sans-serif;
  font-size: 16px;
  font-weight: 300;
}

.drawing .ucs {
  stroke: #555;
}

.drawing .ucs text {
  font-size: 12px;
}

.polar-tip {
  position: absolute;
  top: 297px;
  left: 540px;
  width: 107px;
  height: 12px;
  padding-left: 1px;
  background: #0c1059;
  color: #d6d8f2;
  font-size: 8px;
  line-height: 12px;
  white-space: nowrap;
}

.polar-tip span {
  font-size: 9px;
}

/* Layout tabs */
.layout-tabs {
  display: flex;
  flex: none;
  height: 12px;
  border-top: 1px solid #333;
  background: #e7e8d9;
}

.layout-tabs .nav {
  width: 15px;
  border-right: 1px solid #cfd0c0;
}

.nav svg {
  width: 10px;
  height: 10px;
  margin: 0 auto;
  fill: #111;
}

.tab {
  position: relative;
  width: 33px;
  border-bottom: 1px solid #222;
  line-height: 10px;
}

.tab::after {
  content: "";
  position: absolute;
  top: 0;
  right: 0;
  width: 1px;
  height: 11px;
  background: #222;
  transform: skewX(-25deg);
}

.tab.active {
  width: 30px;
  margin-top: -1px;
  background: #f8f8f8;
  clip-path: polygon(0 0, 100% 0, 88% 100%, 14% 100%);
  font-weight: bold;
}

.tab.active::before {
  content: "";
  position: absolute;
  top: 0;
  left: 3px;
  width: 1px;
  height: 12px;
  background: #222;
  transform: skewX(25deg);
}

/* Command window */
.command-window {
  flex: none;
  height: 12px;
  padding: 8px 4px 0 12px;
  border-top: 1px solid #aeb09c;
}

.history {
  height: 3px;
  border-top: 1px solid #111;
  border-bottom: 1px solid #777;
  background: repeating-linear-gradient(90deg, #222 0, #222 3px, #e7e8d9 3px, #e7e8d9 5px, #555 5px, #555 8px, #e7e8d9 8px, #e7e8d9 11px) no-repeat left / 220px 100%;
}
```
